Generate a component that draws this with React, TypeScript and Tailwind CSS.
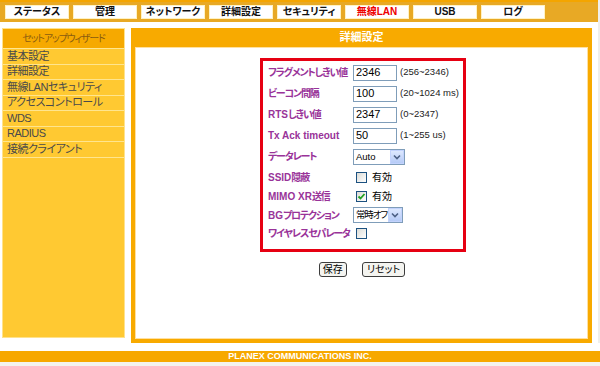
import type { ReactNode } from "react";

const TABS = ["ステータス", "管理", "ネットワーク", "詳細設定", "セキュリティ", "無線LAN", "USB", "ログ"];

const MENU = ["基本設定", "詳細設定", "無線LANセキュリティ", "アクセスコントロール", "WDS", "RADIUS", "接続クライアント"];

const FONT = "[font-family:'Liberation_Sans','Noto_Sans_CJK_JP',sans-serif] [font-feature-settings:'palt']";

function Tight({ text }: { text: string }) {
  const parts = text.split(/([\u3000-\u9fff\uff00-\uffef]+)/).filter(Boolean);
  return (
    <>
      {parts.map((p, i) =>
        /[\u3000-\u9fff\uff00-\uffef]/.test(p) ? (
          <span key={i} className="tracking-[-1.2px]">
            {p}
          </span>
        ) : (
          <span key={i}>{p}</span>
        )
      )}
    </>
  );
}

function TextBox({ value }: { value: string }) {
  return (
    <span className="flex items-center h-[16px] w-[44px] border border-[#7f9db9] bg-white pl-[2px] text-[11px] text-black leading-none">
      {value}
    </span>
  );
}

function Select({ value, width }: { value: string; width: string }) {
  return (
    <span className={`flex items-center h-[16px] ${width} border border-[#7f9db9] bg-white text-[9.5px] text-black leading-none whitespace-nowrap`}>
      <span className="flex-1 pl-[2px] overflow-hidden">
        <Tight text={value} />
      </span>
      <span className="flex items-center justify-center w-[14px] h-[14px] shrink-0 bg-gradient-to-b from-[#dde8fe] to-[#b6cbf7] border border-[#c3d3fd]">
        <svg width="8" height="6" viewBox="0 0 8 6">
          <path d="M1 1.5 L4 4.5 L7 1.5" fill="none" stroke="#4d6185" strokeWidth="1.6" />
        </svg>
      </span>
    </span>
  );
}

function Check({ checked, label }: { checked?: boolean; label?: string }) {
  return (
    <span className="flex items-center gap-[5px] pl-[3px]">
      <span className="flex items-center justify-center w-[11px] h-[11px] border border-[#1c5180] bg-gradient-to-br from-[#dcdcd7] to-white">
        {checked && (
          <svg width="9" height="9" viewBox="0 0 9 9">
            <path d="M1.5 4.5 L3.5 6.5 L7.5 2" fill="none" stroke="#21a121" strokeWidth="1.8" />
          </svg>
        )}
      </span>
      {label && <span className="text-[10px] text-black">{label}</span>}
    </span>
  );
}

function Row({ label, h, children }: { label: string; h: string; children: ReactNode }) {
  return (
    <div className={`flex items-center ${h}`}>
      <span className="w-[85px] text-[10px] font-bold text-[#993399] whitespace-nowrap">
        <Tight text={label} />
      </span>
      <div className="flex items-center">{children}</div>
    </div>
  );
}

function Hint({ children }: { children: ReactNode }) {
  return <span className="ml-[3px] text-[9.5px] text-[#222] whitespace-nowrap">{children}</span>;
}

export default function App() {
  return (
    <div className={`relative w-[600px] h-[366px] bg-white overflow-hidden flex flex-col ${FONT}`}>
      <div className="flex">
        <div className="flex-1 flex flex-col">
          {/* Top tabs */}
          <div className="h-[22px] bg-[#e8a925] border-t-2 border-[#f4a500] flex items-start pt-[3px] pl-[5px] gap-[4px]">
            {TABS.map((t) => (
              <div
                key={t}
                className={`w-[64px] h-[14px] bg-white border border-[#fff2c4] flex items-center justify-center text-[10px] font-bold leading-none ${
                  t === "無線LAN" ? "text-[#ee0000]" : "text-[#111]"
                }`}
              >
                {t}
              </div>
            ))}
          </div>

          {/* Body */}
          <div className="flex mt-[6px] pl-[2px] gap-[6px]">
            {/* Sidebar */}
            <div className="w-[123px] h-[310px] flex flex-col bg-[#ffc932] border border-[#ffe28c]">
              <div className="h-[19px] bg-[#f6a900] flex items-center justify-center text-[10px] text-[#8a5c10]">
                <Tight text="セットアップウィザード" />
              </div>
              {MENU.map((m) => (
                <div
                  key={m}
                  className="h-[15.5px] flex items-center pl-[4px] border-t border-[#ffe58f] text-[11px] text-[#4a4a4a] leading-none tracking-[-0.5px]"
                >
                  {m}
                </div>
              ))}
              <div className="border-t border-[#ffe58f]" />
            </div>

            {/* Main panel */}
            <div className="w-[461px] h-[315px] flex flex-col bg-[#f8aa00] px-[4px] pb-[4px]">
              <div className="h-[19px] flex items-center justify-center text-[11px] font-bold text-white">詳細設定</div>
              <div className="flex-1 bg-white border border-[#ffe0a0] flex flex-col items-center pt-[10px]">
                <div className="w-[206px] border-[3px] border-[#e60012] pl-[5px] pt-[1px] pb-[7px] ml-[3px]">
                  <Row label="フラグメントしきい値" h="h-[21px]">
                    <TextBox value="2346" />
                    <Hint>(256~2346)</Hint>
                  </Row>
                  <Row label="ビーコン間隔" h="h-[21px]">
                    <TextBox value="100" />
                    <Hint>(20~1024 ms)</Hint>
                  </Row>
                  <Row label="RTSしきい値" h="h-[21px]">
                    <TextBox value="2347" />
                    <Hint>(0~2347)</Hint>
                  </Row>
                  <Row label="Tx Ack timeout" h="h-[21px]">
                    <TextBox value="50" />
                    <Hint>(1~255 us)</Hint>
                  </Row>
                  <Row label="データレート" h="h-[21px]">
                    <Select value="Auto" width="w-[52px]" />
                  </Row>
                  <Row label="SSID隠蔽" h="h-[20px]">
                    <Check label="有効" />
                  </Row>
                  <Row label="MIMO XR送信" h="h-[19px]">
                    <Check checked label="有効" />
                  </Row>
                  <Row label="BGプロテクション" h="h-[18px]">
                    <Select value="常時オフ" width="w-[50px]" />
                  </Row>
                  <Row label="ワイヤレスセパレータ" h="h-[18px]">
                    <Check />
                  </Row>
                </div>

                <div className="flex gap-[15px] mt-[10px] ml-[1px]">
                  <button className="h-[15px] px-[3px] bg-[#f4f4f0] border border-[#3c3c3c] rounded-[3px] text-[10px] text-black leading-none">
                    保存
                  </button>
                  <button className="h-[15px] px-[4px] bg-[#f4f4f0] border border-[#3c3c3c] rounded-[3px] text-[10px] text-black leading-none">
                    リセット
                  </button>
                </div>
              </div>
            </div>
          </div>
        </div>
        <div className="w-[2px] self-stretch bg-[#efefec]" />
      </div>

      {/* Footer */}
      <div className="mt-[8px] h-[11px] bg-[#f7a800] flex items-center justify-center text-[9px] font-bold text-white leading-none">
        PLANEX COMMUNICATIONS INC.
      </div>
      <div className="flex-1 bg-[#f3f3ef]" />
    </div>
  );
}
